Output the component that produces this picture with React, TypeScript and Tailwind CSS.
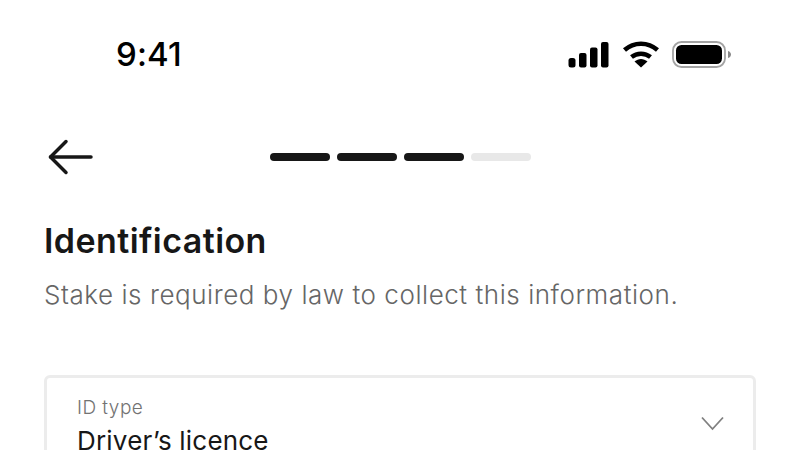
import React from 'react';

const font = { fontFamily: 'Inter, sans-serif' };

const StatusIcons = () => (
  <div className="flex items-center">
    <svg width="42" height="27" viewBox="0 0 42 27" fill="#000">
      <rect x="0.5" y="17" width="7" height="9.5" rx="2.5" />
      <rect x="11" y="12" width="7.5" height="14.5" rx="2" />
      <rect x="22" y="6.5" width="7.5" height="20" rx="2" />
      <rect x="33" y="1" width="7.5" height="25.5" rx="2" />
    </svg>
    <svg className="ml-[12px]" width="38" height="28" viewBox="0 0 38 28" fill="none" stroke="#000" strokeWidth="4.5">
      <path d="M2.5 10C12 1.5 26 1.5 35.5 10" />
      <path d="M9.5 17C15 12.5 23 12.5 28.5 17" />
      <path d="M12.5 21.5L19 27.5L25.5 21.5C21.5 18 16.5 18 12.5 21.5Z" fill="#000" stroke="none" />
    </svg>
    <svg className="ml-[12px]" width="60" height="27" viewBox="0 0 60 27" fill="none">
      <rect x="1" y="1" width="52" height="25" rx="8.5" stroke="#a3a3a3" strokeWidth="1.8" />
      <rect x="4" y="4" width="46" height="19" rx="5.5" fill="#000" />
      <path d="M56 10C58 10.5 59 12 59 13.5C59 15 58 16.5 56 17Z" fill="#8a8a8a" />
    </svg>
  </div>
);

const Progress = () => (
  <div className="flex gap-[7px]">
    <div className="h-2 w-[60px] rounded-full bg-[#171717]" />
    <div className="h-2 w-[60px] rounded-full bg-[#171717]" />
    <div className="h-2 w-[60px] rounded-full bg-[#171717]" />
    <div className="h-2 w-[60px] rounded-full bg-[#e8e8e8]" />
  </div>
);

export default function App() {
  return (
    <div className="flex h-[450px] w-[800px] flex-col overflow-hidden bg-white" style={font}>
      {/* Status bar */}
      <div className="flex h-[108px] shrink-0 items-center justify-between pl-[116px] pr-[68px]">
        <span className="text-[33px] font-[550] leading-none tracking-[0.1px] text-black">9:41</span>
        <StatusIcons />
      </div>

      {/* Header */}
      <div className="relative mt-[29px] flex h-[40px] shrink-0 items-center justify-center">
        <svg className="absolute left-[48px] top-[2px]" width="46" height="36" viewBox="0 0 46 36" fill="none" stroke="#171717" strokeWidth="3.5" strokeLinecap="round" strokeLinejoin="round">
          <path d="M2.5 18H43" />
          <path d="M18 2.5L2.5 18L18 33.5" />
        </svg>
        <Progress />
      </div>

      {/* Content */}
      <div className="flex flex-col px-[44px]">
        <h1 className="mt-[42px] text-[34px] font-semibold leading-[44px] tracking-[0.43px] text-[#171717]">Identification</h1>
        <p className="mt-[14px] text-[26px] font-light leading-[36px] tracking-[0.55px] text-[#666666]">Stake is required by law to collect this information.</p>

        <div className="mt-[62px] flex h-[140px] shrink-0 items-start justify-between rounded-[6px] border-[3px] border-[#ececec] pl-[30px] pr-[29px]">
          <div className="flex flex-col">
            <span className="mt-[18px] text-[19px] font-light leading-[24px] tracking-[0.45px] text-[#737373]">ID type</span>
            <span className="mt-[3px] text-[26px] leading-[36px] tracking-[0.2px] text-[#171717]">Driver’s licence</span>
          </div>
          <svg className="mt-[38px]" width="23" height="15" viewBox="0 0 23 15" fill="none" stroke="#808080" strokeWidth="1.8">
            <path d="M1 1.5L11.5 13L22 1.5" />
          </svg>
        </div>
      </div>
    </div>
  );
}
